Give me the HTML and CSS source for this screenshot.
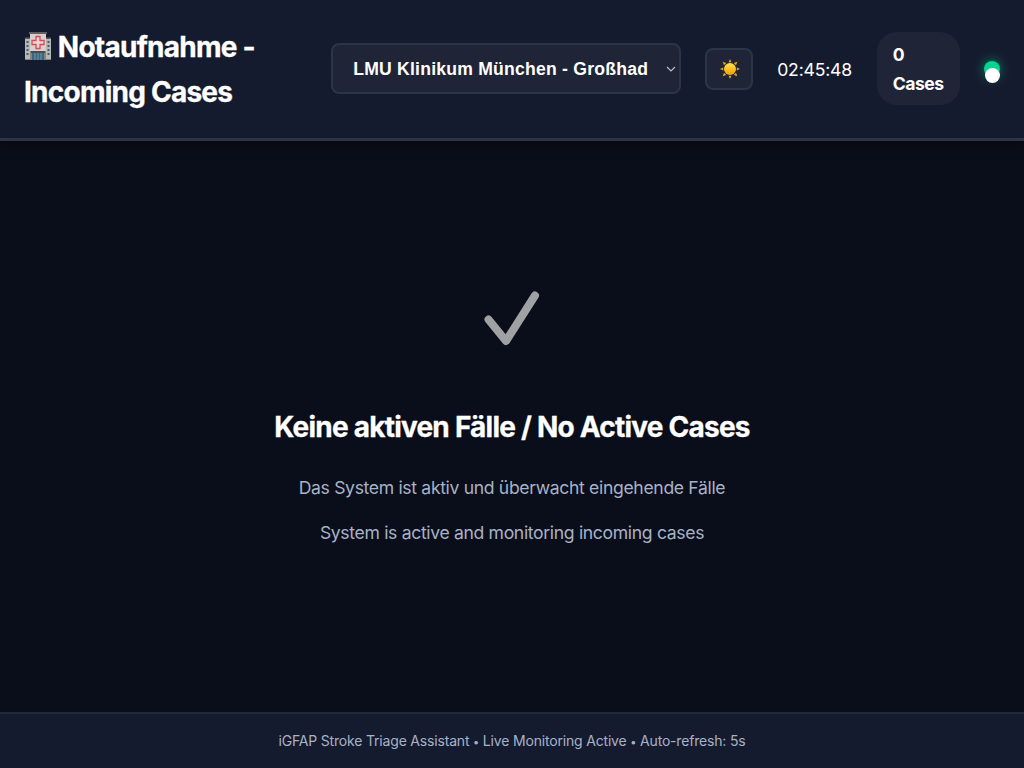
FILE: index.html
```html
<!DOCTYPE html>
<html lang="de">
<head>
<meta charset="utf-8">
<title>Notaufnahme - Incoming Cases</title>
<link rel="stylesheet" href="styles.css">
</head>
<body>
<header class="header">
  <h1 class="title">
    <svg class="hospital" viewBox="0 0 28 28" aria-hidden="true">
      <path fill="#85827f" d="M1 6h26v22H1z"/>
      <path fill="#b9b6b4" d="M1 7h5v20H1zM22 7h5v20h-5z"/>
      <path fill="#625f5e" d="M1 5.500h5v1.500H1zM22 5.500h5v1.500h-5zM5 0h18v2H5z"/>
      <path fill="#d5d2d2" d="M6 2h16v17H6z"/>
      <path fill="#36647e" d="M2.500 9h2v2h-2zm0 4h2v2h-2zm0 4h2v2h-2zm0 4h2v2h-2zM23.500 9h2v2h-2zm0 4h2v2h-2zm0 4h2v2h-2zm0 4h2v2h-2z"/>
      <path fill="#4e4b4c" d="M7 19h14v2H7z"/>
      <path fill="#39677d" d="M8 21h12v7H8z"/>
      <path fill="#7395a0" d="M10.500 21h1v7h-1zm3 0h1v7h-1zm3 0h1v7h-1z"/>
      <path fill="#e8d9d9" stroke="#e74450" stroke-width="1.300" d="M12 4.500h4v4h4v4h-4v4h-4v-4H8v-4h4z"/>
    </svg>
    Notaufnahme -<br>Incoming Cases
  </h1>
  <div class="controls">
    <div class="select" role="combobox" aria-label="Klinik">
      <span>LMU Klinikum München - Großhad</span>
      <svg class="chevron" viewBox="0 0 10 6" aria-hidden="true"><path d="M1 1l4 4 4-4"/></svg>
    </div>
    <button class="theme" aria-label="Theme">
      <svg class="sun" viewBox="0 0 20 20" aria-hidden="true">
        <defs><linearGradient id="sunfill" x1="0" y1="0" x2="0" y2="1"><stop offset="0" stop-color="#ffe34f"/><stop offset="1" stop-color="#f5a000"/></linearGradient></defs>
        <path fill="#e5a526" d="M10 0l1.400 3.200H8.600zM10 20l1.400-3.200H8.600zM0 10l3.200-1.400v2.800zM20 10l-3.200-1.400v2.800zM2.700 2.700l3.500 1.300-2.200 2.200zM17.300 2.700l-3.500 1.300 2.200 2.200zM2.700 17.300l3.500-1.300-2.200-2.200zM17.300 17.300l-3.500-1.300 2.200-2.200z"/>
        <circle cx="10" cy="10" r="6" fill="url(#sunfill)"/>
      </svg>
    </button>
    <time class="clock">02:45:48</time>
    <div class="badge">0<br>Cases</div>
    <div class="status"><span class="dot"></span></div>
  </div>
</header>
<main class="empty">
  <svg class="check" viewBox="0 0 56 56" aria-hidden="true"><path d="M4.500 28.500L22 50 51 4.500"/></svg>
  <h2 class="heading">Keine aktiven Fälle / No Active Cases</h2>
  <p class="line german">Das System ist aktiv und überwacht eingehende Fälle</p>
  <p class="line english">System is active and monitoring incoming cases</p>
</main>
<footer class="footer">iGFAP Stroke Triage Assistant <span class="sep">•</span> Live Monitoring Active <span class="sep">•</span> Auto-refresh: 5s</footer>
</body>
</html>
```
FILE: styles.css
```css
* { box-sizing: border-box; margin: 0; padding: 0; }
body {
  height: 100vh;
  display: flex;
  flex-direction: column;
  overflow: hidden;
  background: #0a0e1a;
  color: #fff;
  font-family: Inter, sans-serif;
  line-height: 1.6;
}
.header {
  height: 140.600px;
  flex: none;
  display: flex;
  align-items: center;
  justify-content: space-between;
  padding: 0 24px;
  background: #151b2e;
  border-bottom: 3px solid #2a3548;
  box-shadow: 0 4px 12px rgba(0, 0, 0, .4);
}
.title { font-size: 28px; font-weight: 700; line-height: 45px; letter-spacing: -.76px; white-space: nowrap; padding-top: 3px; -webkit-text-stroke: .3px #fff; }
.hospital { display: inline-block; width: 28px; height: 28px; vertical-align: -3px; }
.controls { display: flex; align-items: center; gap: 24px; }
.select {
  width: 350px;
  height: 51px;
  display: flex;
  align-items: center;
  justify-content: space-between;
  padding: 2px 3px 0 20px;
  background: #1f2537;
  border: 2px solid #2a3548;
  border-radius: 8px;
  font: 700 17.6px "Liberation Sans", sans-serif;
  letter-spacing: .22px;
  white-space: nowrap;
}
.chevron { width: 10px; height: 6px; margin-top: -2px; fill: none; stroke: #b8bcc5; stroke-width: 1.2; }
.theme {
  width: 48px;
  height: 42px;
  display: grid;
  place-items: center;
  padding-left: 2px;
  background: #1f2537;
  border: 2px solid #2a3548;
  border-radius: 8px;
}
.sun { width: 20px; height: 20px; }
.clock { width: 75.500px; padding-top: 3px; font-size: 17.6px; letter-spacing: -.2px; white-space: nowrap; }
.badge {
  width: 83.300px;
  height: 73px;
  padding: 8px 16px;
  background: #1f2537;
  border-radius: 20px;
  font-size: 17.6px;
  font-weight: 700;
  line-height: 29px;
  letter-spacing: -.5px;
}
.status {
  width: 16px;
  height: 16px;
  border-radius: 50%;
  background: #00d68f;
  box-shadow: 0 0 12px rgba(0, 214, 143, .6);
}
.dot { display: block; width: 15px; height: 15px; margin: 7px 0 0 1px; border-radius: 50%; background: #fff; }
.empty {
  flex: 1;
  display: flex;
  flex-direction: column;
  align-items: center;
  padding-top: 150.400px;
  text-align: center;
}
.check { width: 56px; height: 56px; fill: none; stroke: #a0a1a4; stroke-width: 8; stroke-linecap: round; stroke-linejoin: round; }
.heading { margin-top: 58px; font-size: 28px; line-height: 45px; letter-spacing: -.77px; -webkit-text-stroke: .3px #fff; }
.line { color: #a8b2c7; font-size: 17.6px; line-height: 28px; letter-spacing: -.34px; }
.german { margin-top: 24px; }
.english { margin-top: 17px; }
.footer {
  height: 56px;
  flex: none;
  background: #151b2e;
  border-top: 2px solid #1f2937;
  color: #a8b2c7;
  font-size: 14px;
  line-height: 54px;
  letter-spacing: -.18px;
  text-align: center;
}
.sep { font-size: 11px; }
```
